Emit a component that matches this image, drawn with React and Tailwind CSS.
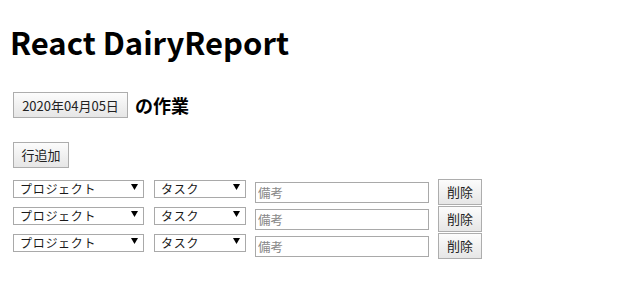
const jp = { fontFamily: '"Noto Sans CJK JP", "Noto Sans", sans-serif' };

function Btn({ children, className = '' }) {
  return (
    <button
      className={`h-[26px] border border-[#adadad] bg-gradient-to-b from-[#fcfcfc] to-[#e6e6e6] px-[6px] text-[13px] text-[#222] leading-none ${className}`}
    >
      {children}
    </button>
  );
}

function FakeSelect({ label, width }) {
  return (
    <div
      className="mt-px flex h-[18px] items-center justify-between border border-[#a9a9a9] bg-white pl-[6px] pr-[5px]"
      style={{ width }}
    >
      <span className="text-[12px] leading-none tracking-[0.7px] text-[#1a1a1a]">{label}</span>
      <svg width="7" height="6" viewBox="0 0 7 6" className="mb-[3px]">
        <path d="M0 0H7L3.5 6Z" fill="#000" />
      </svg>
    </div>
  );
}

function Row() {
  return (
    <div className="flex h-[27px] items-start">
      <FakeSelect label="プロジェクト" width={131} />
      <div className="ml-[10px]">
        <FakeSelect label="タスク" width={92} />
      </div>
      <input
        placeholder="備考"
        className="ml-[9px] mt-[3px] h-[21px] w-[174px] border border-[#a9a9a9] bg-white px-[2px] text-[12.5px] placeholder:text-[#888]"
      />
      <Btn className="ml-[9px] w-[44px] px-0">削除</Btn>
    </div>
  );
}

export default function App() {
  const rows = [1, 2, 3];
  return (
    <div className="min-h-screen bg-white pl-[13px] text-black" style={jp}>
      <h1 className="ml-[-3px] pt-[22px] text-[31px] font-bold leading-[40px]">React DairyReport</h1>
      <div className="mt-[30px] flex h-[26px] items-center">
        <Btn className="w-[115px] px-0 text-[13.5px]">2020年04月05日</Btn>
        <span className="ml-[7px] text-[18px] font-bold">の作業</span>
      </div>
      <div className="mt-[23px]">
        <Btn className="w-[56px] px-0">行追加</Btn>
      </div>
      <div className="mt-[11px]">
        {rows.map((r) => (
          <Row key={r} />
        ))}
      </div>
    </div>
  );
}
